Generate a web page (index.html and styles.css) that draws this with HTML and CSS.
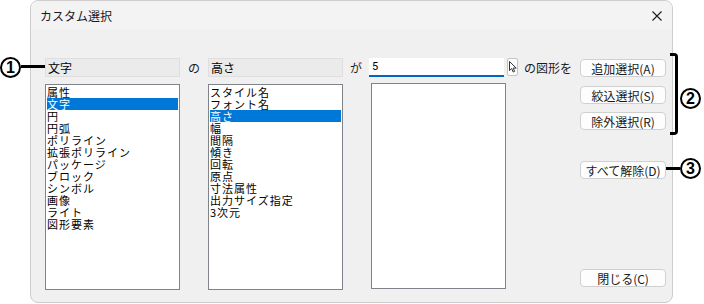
FILE: index.html
```html
<!DOCTYPE html>
<html lang="ja">
<head>
    <meta charset="UTF-8">
    <title>カスタム選択</title>
    <link rel="stylesheet" href="styles.css">
</head>
<body>
    <div class="dialog">
        <div class="titlebar">
            <span class="title">カスタム選択</span>
            <svg class="close" width="10" height="10" viewBox="0 0 10 10">
                <path d="M0.5 0.5 L9.5 9.5 M9.5 0.5 L0.5 9.5" stroke="#1a1a1a" stroke-width="1.1" fill="none"/>
            </svg>
        </div>
        <div class="content">
            <div class="col">
                <div class="field">文字</div>
                <ul class="list">
                    <li>属性</li>
                    <li class="selected">文字</li>
                    <li>円</li>
                    <li>円弧</li>
                    <li>ポリライン</li>
                    <li>拡張ポリライン</li>
                    <li>パッケージ</li>
                    <li>ブロック</li>
                    <li>シンボル</li>
                    <li>画像</li>
                    <li>ライト</li>
                    <li>図形要素</li>
                </ul>
            </div>
            <div class="sep sep-no">の</div>
            <div class="col">
                <div class="field">高さ</div>
                <ul class="list">
                    <li>スタイル名</li>
                    <li>フォント名</li>
                    <li class="selected">高さ</li>
                    <li>幅</li>
                    <li>間隔</li>
                    <li>傾き</li>
                    <li>回転</li>
                    <li>原点</li>
                    <li>寸法属性</li>
                    <li>出力サイズ指定</li>
                    <li>3次元</li>
                </ul>
            </div>
            <div class="sep sep-ga">が</div>
            <div class="col col-value">
                <div class="input">5</div>
                <ul class="list list-value"></ul>
            </div>
            <div class="picker">
                <svg width="8" height="12" viewBox="0 0 8 12">
                    <path d="M0.5 0.5 L0.5 9.5 L2.7 7.6 L4.2 11 L5.6 10.4 L4.2 7.1 L7.2 7.1 Z" fill="#fff" stroke="#333" stroke-width="1"/>
                </svg>
            </div>
            <div class="sep sep-shape">の図形を</div>
            <div class="buttons">
                <button class="btn btn-add">追加選択(A)</button>
                <button class="btn btn-narrow">絞込選択(S)</button>
                <button class="btn btn-exclude">除外選択(R)</button>
                <button class="btn btn-clear">すべて解除(D)</button>
                <button class="btn btn-close">閉じる(C)</button>
            </div>
        </div>
    </div>

    <div class="callout callout-1">1</div>
    <div class="lead lead-1"></div>
    <div class="bracket"></div>
    <div class="callout callout-2">2</div>
    <div class="callout callout-3">3</div>
    <div class="lead lead-3"></div>
</body>
</html>
```

FILE: styles.css
```css
body {
    margin: 0;
    width: 704px;
    height: 304px;
    position: relative;
    background: #fff;
    font-family: "Noto Sans CJK JP", "Noto Sans", sans-serif;
    font-size: 12px;
    color: #000;
    overflow: hidden;
}

.dialog {
    box-sizing: border-box;
    margin-left: 30px;
    width: 643px;
    height: 303px;
    border: 1px solid #cdcdcd;
    border-radius: 8px;
    background: #f0f0f0;
    overflow: hidden;
}

.titlebar {
    height: 29px;
    display: flex;
    align-items: center;
    justify-content: space-between;
    padding: 0 9px 0 9px;
    background: #f3f3f3;
}

.title {
    font-size: 12px;
    color: #1a1a1a;
}

.close {
    margin-right: 1px;
}

.content {
    display: flex;
    align-items: flex-start;
    padding: 28px 0 0 14px;
}

.col {
    width: 135px;
    display: flex;
    flex-direction: column;
}

.field {
    box-sizing: border-box;
    height: 19px;
    line-height: 17px;
    padding-left: 2px;
    background: #ebebeb;
    border: 1px solid #dedede;
}

.list {
    box-sizing: border-box;
    list-style: none;
    margin: 7px 0 0 0;
    padding: 1px;
    height: 206px;
    background: #fff;
    border: 1px solid #80848a;
}

.list li {
    height: 12px;
    line-height: 12px;
    font-size: 11px;
    letter-spacing: 1px;
    white-space: nowrap;
}

.list li.selected {
    background: #0078d7;
    color: #fff;
}

.sep {
    height: 19px;
    line-height: 19px;
    text-align: center;
    color: #1a1a1a;
}

.sep-no {
    width: 28px;
}

.sep-ga {
    width: 26px;
}

.col-value {
    width: 137px;
}

.input {
    box-sizing: border-box;
    width: 135px;
    height: 19px;
    line-height: 18px;
    padding-left: 3px;
    background: #fff;
    border-bottom: 2px solid #0067c0;
    font-family: Roboto, "Liberation Sans", sans-serif;
    font-size: 11px;
}

.list-value {
    width: 135px;
    margin-left: 2px;
    margin-top: 6px;
}

.picker {
    box-sizing: border-box;
    width: 11px;
    height: 18px;
    margin-left: 1px;
    display: flex;
    align-items: center;
    justify-content: center;
    background: #fbfbfb;
    border: 1px solid #c4c4c4;
    border-radius: 2px;
}

.sep-shape {
    margin-left: 6px;
    text-align: left;
}

.buttons {
    display: flex;
    flex-direction: column;
    width: 86px;
    margin-left: 8px;
}

.btn {
    box-sizing: border-box;
    height: 18px;
    padding: 0;
    background: #fdfdfd;
    border: 1px solid #d0d0d0;
    border-radius: 4px;
    font-family: "Noto Sans CJK JP", sans-serif;
    font-size: 12px;
    line-height: 15px;
    color: #1a1a1a;
}

.btn-add {
    margin-top: 1px;
}

.btn-narrow {
    margin-top: 9px;
}

.btn-exclude {
    margin-top: 8px;
}

.btn-clear {
    margin-top: 31px;
}

.btn-close {
    margin-top: 90px;
}

.callout {
    position: absolute;
    box-sizing: border-box;
    width: 21px;
    height: 21px;
    border: 2px solid #000;
    border-radius: 50%;
    font-family: "Liberation Sans", sans-serif;
    font-weight: bold;
    font-size: 16px;
    line-height: 17px;
    text-align: center;
}

.callout-1 {
    left: 0;
    top: 57px;
}

.callout-2 {
    left: 680px;
    top: 88px;
}

.callout-3 {
    left: 680px;
    top: 158px;
}

.lead {
    position: absolute;
    background: #000;
}

.lead-1 {
    left: 21px;
    top: 65px;
    width: 24px;
    height: 3px;
}

.lead-3 {
    left: 666px;
    top: 167px;
    width: 14px;
    height: 3px;
}

.bracket {
    position: absolute;
    box-sizing: border-box;
    left: 670px;
    top: 53px;
    width: 8px;
    height: 82px;
    border: 3px solid #000;
    border-left: none;
    border-radius: 0 4px 4px 0;
}
```
